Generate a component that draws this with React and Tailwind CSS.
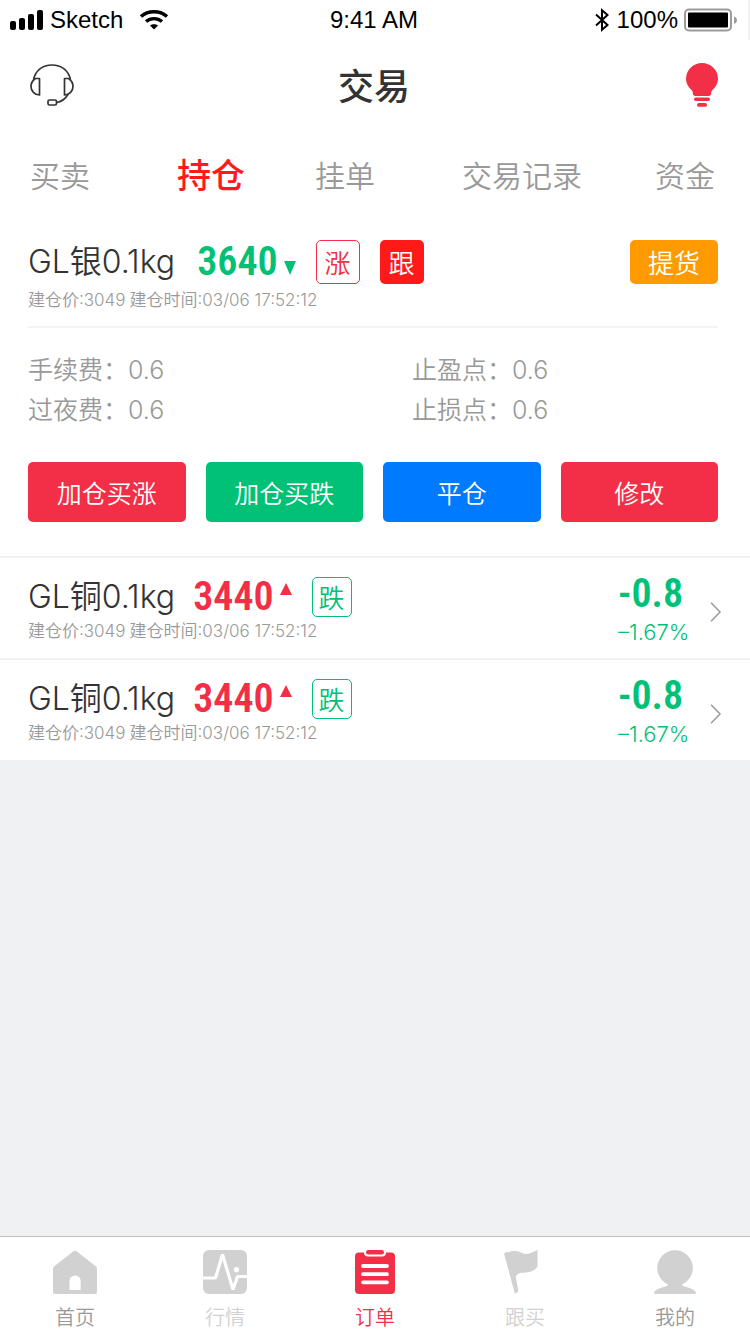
import React from 'react';

const NUM = "font-['Roboto_Condensed','Open_Sans_Condensed','Roboto',sans-serif] font-semibold";

function SignalIcon() {
  return (
    <svg width="34" height="20" viewBox="0 0 34 20" aria-hidden="true">
      <rect x="0" y="11" width="6" height="9" rx="2" />
      <rect x="9" y="8" width="6" height="12" rx="2" />
      <rect x="18" y="4" width="6" height="16" rx="2" />
      <rect x="27" y="0" width="6" height="20" rx="2" />
    </svg>
  );
}

function WifiIcon() {
  return (
    <svg width="30" height="20" viewBox="0 0 30 20" fill="none" stroke="#000" strokeWidth="3.4" aria-hidden="true">
      <path d="M2 6.6 C9 .2 21 .2 28 6.6" />
      <path d="M7 11.6 C11.500 7.600 18.500 7.600 23 11.600" />
      <path d="M11 15.600 C13.200 13.700 16.800 13.700 19 15.600 L15 19.600 Z" fill="#000" stroke="none" />
    </svg>
  );
}

function BluetoothIcon() {
  return (
    <svg width="14" height="24" viewBox="0 0 14 24" fill="none" stroke="#000" strokeWidth="2" aria-hidden="true">
      <path d="M1 6.500 L12.500 17 L7 21.800 V2.200 L12.500 7 L1 17.500" />
    </svg>
  );
}

function BatteryIcon() {
  return (
    <svg width="54" height="24" viewBox="0 0 54 24" aria-hidden="true">
      <rect x="1" y="1.500" width="46" height="21" rx="4" fill="none" stroke="#9b9b9b" strokeWidth="2" />
      <rect x="4" y="4.500" width="40" height="15" rx="1" fill="#000" />
      <path d="M50 8.500 C54 10 54 14.500 50 16 Z" fill="#9b9b9b" />
    </svg>
  );
}

function HeadsetIcon() {
  return (
    <svg width="44" height="44" viewBox="0 0 44 44" fill="none" stroke="#333" strokeWidth="1.700" strokeLinejoin="round" aria-hidden="true">
      <path d="M3.500 16.500 C5.500 7.500 12.500 2 22 2 C31.500 2 38.500 7.500 40.500 16.500" />
      <path d="M9.500 15.500 H5.500 C2.500 17.500 1 20.500 1 23.500 C1 28 4.500 32 9.500 32 Z" />
      <path d="M34.500 15.500 H38.500 C41.500 17.500 43 20.500 43 23.500 C43 28 39.500 32 34.500 32 Z" />
      <path d="M38 31.500 C35.500 35.500 32 38.800 26.500 39.500" />
      <rect x="18" y="37" width="8.500" height="5" rx="1.500" />
    </svg>
  );
}

function BulbIcon() {
  return (
    <svg width="32" height="44" viewBox="0 0 32 44" fill="#f22f47" aria-hidden="true">
      <path d="M16 0 A16 16 0 0 1 32 15.500 C32 20.500 29.500 24 27 26.500 C25.500 28 25.200 28.500 25.200 30 C25.200 32 24.500 33 22.500 33 H9.500 C7.500 33 6.800 32 6.800 30 C6.800 28.500 6.500 28 5 26.500 C2.500 24 0 20.500 0 15.500 A16 16 0 0 1 16 0 Z" />
      <rect x="8" y="34.500" width="16" height="3.500" rx="1.750" />
      <rect x="11" y="40" width="10" height="3.800" rx="1.900" />
    </svg>
  );
}

function HomeIcon() {
  return (
    <svg width="44" height="44" viewBox="0 0 44 44" aria-hidden="true">
      <path d="M20.800 1.100 Q22 .2 23.200 1.100 L43 16.500 Q44 17.300 44 18.500 V42 Q44 44 42 44 H2 Q0 44 0 42 V18.500 Q0 17.300 1 16.500 Z" fill="#d1d1d1" />
      <path d="M16.500 40 V31 A5.600 5.600 0 0 1 27.700 31 V40 Z" fill="#fff" />
    </svg>
  );
}

function PulseIcon() {
  return (
    <svg width="44" height="44" viewBox="0 0 44 44" aria-hidden="true">
      <rect width="44" height="44" rx="6" fill="#d1d1d1" />
      <path d="M0 28 H12.500 L19.500 4.500 L30 39.500 L34.500 26.500 H44" fill="none" stroke="#fff" strokeWidth="3.200" strokeLinejoin="bevel" />
      <circle cx="33.500" cy="19.800" r="2.700" fill="#fff" />
    </svg>
  );
}

function OrdersIcon() {
  return (
    <svg width="44" height="44" viewBox="0 0 44 44" aria-hidden="true">
      <path d="M6 2.500 H38 Q42 2.500 42 6.500 V40 Q42 44 38 44 H6 Q2 44 2 40 V6.500 Q2 2.500 6 2.500 Z" fill="#f22f47" />
      <path d="M11 0 H33 V2.500 Q33 6.500 29 6.500 H15 Q11 6.500 11 2.500 Z" fill="#fff" />
      <rect x="13" y="0" width="18" height="4.600" rx="2.300" fill="#f22f47" />
      <path d="M10 16 H34 M10 24.200 H34 M10 32.300 H34" stroke="#fff" strokeWidth="3.800" strokeLinecap="round" />
    </svg>
  );
}

function FlagIcon() {
  return (
    <svg width="44" height="44" viewBox="0 0 44 44" aria-hidden="true">
      <path d="M1 3.500 L3.500 1.800 L5 2.500 C10 .2 15 .8 18.500 2.800 C24 5.500 28 3 34.500 0 V16.500 C30 23 23 22.500 18 22.800 C13.500 24 12.500 26 13 29 L15.500 41 L12 44 Z" fill="#d1d1d1" />
    </svg>
  );
}

function ProfileIcon() {
  return (
    <svg width="44" height="44" viewBox="0 0 44 44" fill="#d1d1d1" aria-hidden="true">
      <circle cx="22" cy="18" r="17.800" />
      <path d="M15 34 C15.500 36 11 37 7.500 38 C4 39.200 1 41.500 1 42.800 Q1 44 3 44 H41 Q43 44 43 42.800 C43 41.500 40 39.200 36.500 38 C33 37 28.500 36 29 34 Z" />
    </svg>
  );
}

const tabs = ['买卖', '持仓', '挂单', '交易记录', '资金'];

const details = [
  ['手续费', '0.6'],
  ['止盈点', '0.6'],
  ['过夜费', '0.6'],
  ['止损点', '0.6'],
];

const actions = [
  ['加仓买涨', 'bg-[#f22f47]'],
  ['加仓买跌', 'bg-[#00c176]'],
  ['平仓', 'bg-[#007aff]'],
  ['修改', 'bg-[#f22f47]'],
];

const navItems = [
  { label: '首页', Icon: HomeIcon, color: 'text-[#999]' },
  { label: '行情', Icon: PulseIcon, color: 'text-[#d1d1d1]' },
  { label: '订单', Icon: OrdersIcon, color: 'text-[#f22f47]' },
  { label: '跟买', Icon: FlagIcon, color: 'text-[#d1d1d1]' },
  { label: '我的', Icon: ProfileIcon, color: 'text-[#999]' },
];

function OpenInfo() {
  return (
    <p className="flex gap-1 text-[17px] leading-5 text-[#999]">
      <span>建仓价:3049</span>
      <span>建仓时间:03/06 17:52:12</span>
    </p>
  );
}

function PositionRow() {
  return (
    <li className="border-t-2 border-[#f1f1f1]">
      <a href="#position" className="flex h-[100px] items-center px-7">
        <div className="flex-1">
          <div className="flex h-11 items-center">
            <span className="text-[32px] leading-10 text-[#333]">GL铜0.1kg</span>
            <span className={`${NUM} ml-[18px] text-[40px] leading-10 text-[#f22f47]`}>3440</span>
            <svg className="mb-4 ml-1.5" width="12" height="12" viewBox="0 0 12 12" fill="#f22f47" aria-hidden="true">
              <path d="M6 0 L12 12 H0 Z" />
            </svg>
            <span className="ml-5 flex size-10 items-center justify-center rounded-[5px] border border-[#00c176] pt-1 text-[26px] leading-none text-[#00c176]">跌</span>
          </div>
          <div className="pt-0.5"><OpenInfo /></div>
        </div>
        <div className="mt-2 w-[92px] text-[#00c176]">
          <p className={`${NUM} text-[40px] leading-10`}>-0.8</p>
          <p className="text-[22px] leading-9">–1.67%</p>
        </div>
        <svg className="mt-2" width="12" height="20" viewBox="0 0 12 20" fill="none" stroke="#999" strokeWidth="1.500" aria-hidden="true">
          <path d="M1 .8 L10 10 L1 19.200" />
        </svg>
      </a>
    </li>
  );
}

export default function App() {
  return (
    <div className="flex min-h-screen flex-col bg-[#f0f1f3] font-['Inter','Noto_Sans_CJK_SC',sans-serif] font-[350]">
      <div className="grid h-10 grid-cols-3 items-center border-r-2 border-[#f2f2f2] bg-white px-2.5 font-['Liberation_Sans',sans-serif] text-[24px] leading-10 font-normal text-black">
        <div className="flex items-center">
          <SignalIcon />
          <span className="ml-1.5">Sketch</span>
          <span className="ml-4"><WifiIcon /></span>
        </div>
        <span className="text-center">9:41 AM</span>
        <div className="flex items-center justify-end">
          <BluetoothIcon />
          <span className="ml-2 mr-1.5">100%</span>
          <BatteryIcon />
        </div>
      </div>

      <header className="grid h-[90px] grid-cols-[1fr_auto_1fr] items-center bg-white pr-8 pl-[30px]">
        <button type="button" aria-label="客服" className="justify-self-start"><HeadsetIcon /></button>
        <h1 className="pt-1 text-[36px] leading-10 font-medium text-[#333]">交易</h1>
        <button type="button" aria-label="提示" className="justify-self-end"><BulbIcon /></button>
      </header>

      <nav className="grid h-[90px] grid-cols-[147fr_138fr_147fr_193fr_65fr] items-center bg-white px-[30px] pt-0.5">
        {tabs.map((tab) => (
          <button
            key={tab}
            type="button"
            className={
              tab === '持仓'
                ? 'text-left text-[34px] leading-10 font-medium whitespace-nowrap text-[#ff1919]'
                : 'text-left text-[30px] leading-10 whitespace-nowrap text-[#999]'
            }
          >
            {tab}
          </button>
        ))}
      </nav>

      <main className="flex-1">
        <section className="bg-white px-7 pt-5 pb-[34px]">
          <div className="mr-1 border-b-2 border-[#f3f3f3] pb-4">
            <div className="flex h-11 items-center">
              <span className="text-[32px] leading-10 text-[#333]">GL银0.1kg</span>
              <span className={`${NUM} ml-[22px] text-[40px] leading-10 text-[#00c176]`}>3640</span>
              <svg className="mt-3 ml-1.5" width="12" height="14" viewBox="0 0 12 14" fill="#00c176" aria-hidden="true">
                <path d="M0 0 H12 L6 14 Z" />
              </svg>
              <span className="ml-5 flex size-11 items-center justify-center rounded-[5px] border border-[#f22f47] pt-1 text-[26px] leading-none text-[#f22f47]">涨</span>
              <span className="ml-5 flex size-11 items-center justify-center rounded-[5px] bg-[#ff1919] pt-1 text-[26px] leading-none text-white">跟</span>
              <button type="button" className="ml-auto h-11 w-[88px] rounded-[5px] bg-[#ff9b00] pt-1 text-[26px] leading-none text-white">提货</button>
            </div>
            <div className="pt-1.5"><OpenInfo /></div>
          </div>

          <dl className="grid grid-cols-[384fr_310fr] pt-[22px] text-[25px] leading-10 text-[#999]">
            {details.map(([label, value]) => (
              <div key={label} className="flex">
                <dt>{label}：</dt>
                <dd>{value}</dd>
              </div>
            ))}
          </dl>

          <div className="mr-1 grid grid-cols-4 gap-5 pt-8">
            {actions.map(([label, bg]) => (
              <button key={label} type="button" className={`h-[60px] rounded-[5px] pt-1 text-[25px] leading-none text-white ${bg}`}>
                {label}
              </button>
            ))}
          </div>
        </section>

        <ul className="bg-white">
          <PositionRow />
          <PositionRow />
        </ul>
      </main>

      <nav className="grid h-[98px] grid-cols-5 border-t border-[#bfbfbf] bg-white pt-[13px]">
        {navItems.map(({ label, Icon, color }) => (
          <a key={label} href="#nav" className={`flex flex-col items-center gap-2.5 text-[20px] leading-7 ${color}`}>
            <Icon />
            {label}
          </a>
        ))}
      </nav>
    </div>
  );
}
